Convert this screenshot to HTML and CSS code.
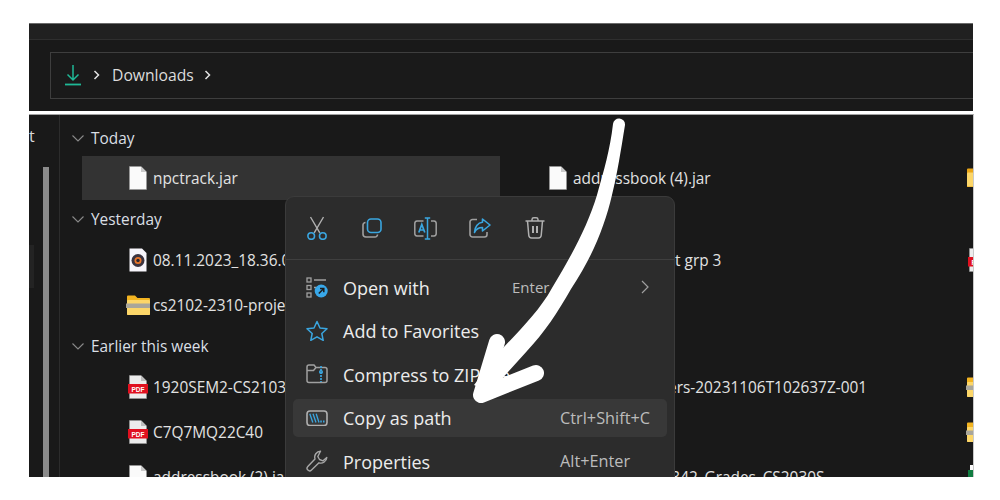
FILE: index.html
```html
<!DOCTYPE html>
<html lang="en">
<head>
<meta charset="utf-8">
<title>Downloads</title>
<link rel="stylesheet" href="styles.css">
</head>
<body>
<svg class="defs" width="0" height="0" aria-hidden="true">
  <defs>
    <symbol id="doc" viewBox="0 0 18 24"><path d="M.5.5H12L17.5 6V23.5H.5Z" fill="#fafafa" stroke="#9a9a9a" stroke-width=".6"/><path d="M12 .5V6H17.5Z" fill="#c9c9c9"/></symbol>
    <symbol id="pdf" viewBox="0 0 20 24"><path d="M1.5.5H13L18.5 6V23.5H1.5Z" fill="#ececec" stroke="#9a9a9a" stroke-width=".6"/><path d="M13 .5V6H18.5Z" fill="#bdbdbd"/><rect x="0" y="9" width="20" height="9.500" fill="#e0101f"/><text x="10" y="16.500" class="pdf-text" text-anchor="middle">PDF</text></symbol>
    <symbol id="zip" viewBox="0 0 24 20"><path d="M1 1.500A1 1 0 0 1 2 .5H9L11.500 3H23A1 1 0 0 1 24 4V19A1 1 0 0 1 23 20H2A1 1 0 0 1 1 19Z" fill="#f3b421"/><rect x="1" y="5" width="23" height="15" rx="1" fill="#fcd669"/><rect x="0" y="8.500" width="24" height="4.500" fill="#a9a69a"/></symbol>
    <symbol id="folder" viewBox="0 0 24 20"><path d="M1 1.500A1 1 0 0 1 2 .5H9L11.500 3H23V19H1Z" fill="#eaa516"/><rect x="1" y="4.500" width="23" height="14" rx="1" fill="#fcd669"/></symbol>
  </defs>
</svg>

<main class="shot">
  <header class="top-pane">
    <div class="toolbar"></div>
    <div class="address-row">
      <nav class="address">
        <svg class="dl-icon" viewBox="0 0 16 22" width="16" height="22"><path d="M8 1V16M2.500 10.500 8 16l5.500-5.500" fill="none" stroke="#1fb896" stroke-width="1.500"/><path d="M0 20.500H16" stroke="#1fb896" stroke-width="1.800"/></svg>
        <svg class="crumb" viewBox="0 0 7 10" width="7" height="10"><path d="M1.500 1 5.500 5l-4 4" fill="none" stroke="#e4e4e4" stroke-width="1.500"/></svg>
        <span class="crumb-text">Downloads</span>
        <svg class="crumb" viewBox="0 0 7 10" width="7" height="10"><path d="M1.500 1 5.500 5l-4 4" fill="none" stroke="#e4e4e4" stroke-width="1.500"/></svg>
      </nav>
    </div>
  </header>

  <section class="bottom-pane">
    <aside class="side">
      <span class="side-letter">t</span>
      <span class="side-active"></span>
      <span class="side-thumb"></span>
    </aside>

    <div class="files">
      <h2 class="group">
        <svg class="chev" viewBox="0 0 12 7" width="12" height="7"><path d="M.5.5 6 6 11.500.5" fill="none" stroke="#8a8a8a" stroke-width="1.100"/></svg>
        Today
      </h2>
      <div class="row">
        <div class="cell selected"><span class="slot"><svg class="ic" width="18" height="24"><use href="#doc"/></svg></span><span>npctrack.jar</span></div>
        <div class="cell"><span class="slot"><svg class="ic" width="18" height="24"><use href="#doc"/></svg></span><span>addressbook (4).jar</span></div>
        <div class="cell"><span class="slot"><svg class="ic-wide" width="24" height="20"><use href="#folder"/></svg></span></div>
      </div>

      <h2 class="group">
        <svg class="chev" viewBox="0 0 12 7" width="12" height="7"><path d="M.5.5 6 6 11.500.5" fill="none" stroke="#8a8a8a" stroke-width="1.100"/></svg>
        Yesterday
      </h2>
      <div class="row">
        <div class="cell">
          <span class="slot"><svg class="ic" width="18" height="24" viewBox="0 0 18 24"><path d="M.5.5H13L17.500 5V23.500H.5Z" fill="#f7f5fb"/><circle cx="9" cy="12.500" r="6.500" fill="#3a3340"/><circle cx="9" cy="12.500" r="3.500" fill="#e8752a"/><circle cx="9" cy="12.500" r="1.700" fill="#2a2530"/></svg></span>
          <span>08.11.2023_18.36.04.mp4</span>
        </div>
        <div class="cell"><span class="slot"><svg class="ic" width="18" height="24"><use href="#doc"/></svg></span><span>CS2102 Project grp 3</span></div>
        <div class="cell"><span class="slot"><svg class="ic-pdf" width="20" height="24"><use href="#pdf"/></svg></span></div>
      </div>
      <div class="row">
        <div class="cell"><span class="slot"><svg class="ic-wide" width="24" height="20"><use href="#zip"/></svg></span><span>cs2102-2310-project</span></div>
      </div>

      <h2 class="group">
        <svg class="chev" viewBox="0 0 12 7" width="12" height="7"><path d="M.5.5 6 6 11.500.5" fill="none" stroke="#8a8a8a" stroke-width="1.100"/></svg>
        Earlier this week
      </h2>
      <div class="row">
        <div class="cell"><span class="slot"><svg class="ic-pdf" width="20" height="24"><use href="#pdf"/></svg></span><span>1920SEM2-CS2103T.pdf</span></div>
        <div class="cell"><span class="slot"><svg class="ic" width="18" height="24"><use href="#doc"/></svg></span><span>Our Year Papers-20231106T102637Z-001</span></div>
        <div class="cell"><span class="slot"><svg class="ic-wide" width="24" height="20"><use href="#zip"/></svg></span></div>
      </div>
      <div class="row">
        <div class="cell"><span class="slot"><svg class="ic-pdf" width="20" height="24"><use href="#pdf"/></svg></span><span>C7Q7MQ22C40</span></div>
        <div class="cell"></div>
        <div class="cell"><span class="slot"><svg class="ic-wide" width="24" height="20"><use href="#zip"/></svg></span></div>
      </div>
      <div class="row">
        <div class="cell"><span class="slot"><svg class="ic" width="18" height="24"><use href="#doc"/></svg></span><span>addressbook (2).jar</span></div>
        <div class="cell"><span class="slot"><svg class="ic" width="18" height="24"><use href="#doc"/></svg></span><span>AY2324_Sem_342_Grades_CS2030S</span></div>
        <div class="cell"><span class="slot"><svg class="ic-pdf" width="20" height="24" viewBox="0 0 20 24"><rect x="2" y="0" width="16" height="24" fill="#fafafa"/><rect x="0" y="5" width="20" height="14" fill="#107c41"/></svg></span></div>
      </div>
    </div>

    <div class="menu">
      <div class="menu-actions">
        <button class="action" type="button" aria-label="Cut">
          <svg viewBox="0 0 20 24" width="20" height="24" fill="none" stroke-width="1.400"><path d="M3.500 1 12.800 16.800M16.500 1 7.200 16.800" stroke="#b0b0b0"/><circle cx="4.200" cy="20" r="3.300" stroke="#3aa6e0" stroke-width="1.600"/><circle cx="15.800" cy="20" r="3.300" stroke="#3aa6e0" stroke-width="1.600"/></svg>
        </button>
        <button class="action" type="button" aria-label="Copy">
          <svg viewBox="0 0 20 20" width="20" height="20" fill="none" stroke-width="1.600"><path d="M3.500 4.500A2.500 2.500 0 0 0 1 7V16A3 3 0 0 0 4 19H13A2.500 2.500 0 0 0 15.500 16.500" stroke="#a0a0a0"/><rect x="5.500" y="1" width="13.500" height="13.500" rx="3.500" stroke="#3aa6e0"/></svg>
        </button>
        <button class="action" type="button" aria-label="Rename">
          <svg viewBox="0 0 23 23" width="23" height="23" fill="none" stroke-width="1.500"><path d="M9.500 4H3A2.500 2.500 0 0 0 .8 6.500V16.500A2.500 2.500 0 0 0 3 19H9.500M17 4H20A2.500 2.500 0 0 1 22.200 6.500V16.500A2.500 2.500 0 0 1 20 19H17" stroke="#a0a0a0"/><path d="M13.500 1V22M10.800 1H16.200M10.800 22H16.200" stroke="#3aa6e0"/><path d="M4.800 15.500 7.800 7.500 10.800 15.500M5.800 13H9.800" stroke="#3aa6e0" stroke-width="1.700"/></svg>
        </button>
        <button class="action" type="button" aria-label="Share">
          <svg viewBox="0 0 22 20" width="22" height="20" fill="none" stroke-width="1.600"><path d="M8 1.500H3.500A2.500 2.500 0 0 0 1 4V16.500A2.500 2.500 0 0 0 3.500 19H15.500A2.500 2.500 0 0 0 18 16.500V14" stroke="#a0a0a0"/><path d="M13.500 1 21 7 13.500 13V9.500C10 9.500 7 11 5.500 14.500 5.500 9 9 4.500 13.500 4.300Z" stroke="#3aa6e0" stroke-linejoin="round"/></svg>
        </button>
        <button class="action" type="button" aria-label="Delete">
          <svg viewBox="0 0 20 22" width="20" height="22" fill="none" stroke="#b0b0b0" stroke-width="1.500"><path d="M.5 4H19.500M7 4V2.500A1.800 1.800 0 0 1 8.800 .8H11.200A1.800 1.800 0 0 1 13 2.500V4M2.500 4 3.800 18.500A2.800 2.800 0 0 0 6.500 21H13.500A2.800 2.800 0 0 0 16.200 18.500L17.500 4"/><path d="M8 9V16M12 9V16" stroke-width="2"/></svg>
        </button>
      </div>
      <ul class="menu-list">
        <li class="item">
          <svg class="item-icon" viewBox="0 0 22 21" width="22" height="21" fill="none" stroke="#a0a0a0" stroke-width="1.300"><rect x="1" y="1" width="4" height="4"/><rect x="1" y="8.500" width="4" height="4"/><rect x="1" y="16" width="4" height="4"/><path d="M8 3H20M8 10.500H10"/><circle cx="15.200" cy="14" r="6.500" fill="#38a8ea" stroke="none"/><path d="M12.800 16.500 17.500 11.800M14 11.500H17.800V15.300" stroke="#1c1c1c" stroke-width="1.500"/></svg>
          <span class="label">Open with</span>
          <span class="short wide">Enter</span>
          <svg class="sub" viewBox="0 0 8 14" width="8" height="14"><path d="M1 1 7 7 1 13" fill="none" stroke="#a0a0a0" stroke-width="1.200"/></svg>
        </li>
        <li class="item">
          <svg class="item-icon" viewBox="0 0 22 21" width="22" height="21"><path d="M11 1.500 14 8 21 8.800 15.800 13.500 17.200 20.300 11 16.800 4.800 20.300 6.200 13.500 1 8.800 8 8Z" fill="none" stroke="#3aa6e0" stroke-width="1.500" stroke-linejoin="round"/></svg>
          <span class="label">Add to Favorites</span>
        </li>
        <li class="item">
          <svg class="item-icon" viewBox="0 0 22 20" width="22" height="20" fill="none" stroke-width="1.500"><path d="M1 16.500V3A2 2 0 0 1 3 1H8L10 3.500H19A2 2 0 0 1 21 5.500V16.500A2 2 0 0 1 19 18.500H3A2 2 0 0 1 1 16.500ZM1 6.500H7.500L10 3.500" stroke="#a0a0a0"/><path d="M15 2V18" stroke="#3aa6e0" stroke-width="1.700" stroke-dasharray="2 1"/><circle cx="15" cy="8" r="1.300" stroke="#3aa6e0"/></svg>
          <span class="label">Compress to ZIP file</span>
        </li>
        <li class="item active">
          <svg class="item-icon" viewBox="0 0 22 16" width="22" height="16" fill="none" stroke-width="1.600"><rect x="1" y="1" width="20" height="14.500" rx="3" stroke="#b0b0b0"/><path d="M3.800 3.800 6.800 12.500M7 3.800 10 12.500M10.200 3.800 13 12.500" stroke="#3aa6e0" stroke-width="1.300"/><path d="M14.300 11.500H15.800M17 11.500H18.500" stroke="#3aa6e0" stroke-width="1.800"/></svg>
          <span class="label">Copy as path</span>
          <span class="short">Ctrl+Shift+C</span>
        </li>
        <li class="item">
          <svg class="item-icon" viewBox="0 0 22 22" width="22" height="22"><path d="M14.500 1.200A6 6 0 0 0 9 9L1.800 16.500A2.500 2.500 0 0 0 5.500 20L13 12.800A6 6 0 0 0 20.800 7.500L17 10.800 13.500 9.500 11.800 6.500 14.500 1.200Z" fill="none" stroke="#a8a8a8" stroke-width="1.400" stroke-linejoin="round"/></svg>
          <span class="label">Properties</span>
          <span class="short">Alt+Enter</span>
        </li>
      </ul>
    </div>
  </section>

  <svg class="arrow" viewBox="0 0 1000 500" width="1000" height="500" aria-hidden="true">
    <path d="M613 124A6 6 0 0 1 625 125C621 150 617 175 612 195 605 225 593 256 571 289 558 312 544 333 527 351L490 392 474 385 503 348C520 330 540 310 552 288 572 255 588 225 597 195 604 170 610 150 613 124Z" fill="#fff"/>
    <path d="M497 342 481 395 536 373" fill="none" stroke="#fff" stroke-width="16" stroke-linecap="round" stroke-linejoin="round"/>
  </svg>
</main>
</body>
</html>
```

FILE: styles.css
```css
* { box-sizing: border-box; }

html, body {
  margin: 0;
  height: 500px;
  overflow: hidden;
  background: #fff;
}

body {
  font-family: "Open Sans", "Noto Sans", sans-serif;
  color: #e2e2e2;
}

.defs { position: absolute; }

.pdf-text {
  font-family: "Liberation Sans", sans-serif;
  font-size: 6.500px;
  font-weight: 700;
  fill: #fff;
}

.shot {
  position: relative;
  width: 1000px;
  height: 500px;
  padding: 23px 26px 23px 29px;
  display: flex;
  flex-direction: column;
  gap: 3px;
}

/* top pane */
.top-pane {
  height: 88px;
  margin-right: 1px;
  background: #191919;
  border-top: 1px solid #6a6a6a;
  flex: none;
}

.toolbar {
  height: 16px;
  background: #202020;
  border-bottom: 1px solid #2e2e2e;
}

.address-row { padding: 12px 0 0 21px; }

.address {
  height: 47px;
  display: flex;
  align-items: center;
  border: 1px solid #3e3e3e;
  border-right: 0;
  background: #1a1a1a;
  padding: 0 0 2px 14px;
  font-size: 15.700px;
}

.dl-icon { margin-right: 12px; }
.crumb-text { margin: 0 10px 0 12px; color: #dcdcdc; }

/* bottom pane */
.bottom-pane {
  position: relative;
  flex: 1;
  display: flex;
  overflow: hidden;
  background: #191919;
  border-top: 1px solid #a0a0a0;
  border-right: 1px solid #c8c8c8;
}

.side {
  position: relative;
  width: 31px;
  flex: none;
  border-right: 1px solid #2c2c2c;
}

.side-letter {
  position: absolute;
  left: 0;
  top: 10px;
  font-size: 16px;
  color: #d8d8d8;
}

.side-active {
  position: absolute;
  left: 0;
  top: 130px;
  width: 5px;
  height: 43px;
  background: #232323;
}

.side-thumb {
  position: absolute;
  left: 14px;
  top: 52px;
  bottom: 0;
  width: 6px;
  background: #8b8b8b;
}

.files {
  flex: 1;
  min-width: 0;
  padding: 10px 0 0 12px;
  overflow: hidden;
}

.group {
  display: flex;
  align-items: center;
  gap: 7px;
  height: 26px;
  margin: 5px 0 6px;
  font-size: 15.400px;
  font-weight: 400;
  color: #dadfe4;
}

.group:first-child { margin: 0 0 5px; }

.chev { flex: none; }

.row {
  display: grid;
  grid-template-columns: 420px 420px 420px;
  height: 45px;
  margin-left: 10px;
}

.cell {
  display: flex;
  align-items: center;
  height: 44px;
  padding-left: 44px;
  font-size: 15.400px;
  white-space: nowrap;
  margin-right: 2px;
}

.slot {
  flex: none;
  width: 27px;
  display: flex;
  align-items: center;
}

.ic { flex: none; margin-left: 3px; }
.ic-pdf { flex: none; margin-left: 2px; }
.ic-wide { flex: none; }

.selected { background: #333; }

/* context menu */
.menu {
  position: absolute;
  left: 256px;
  top: 81px;
  width: 390px;
  height: 300px;
  background: #2c2c2c;
  border: 1px solid #3b3b3b;
  border-radius: 9px;
}

.menu-actions {
  display: flex;
  height: 63px;
  padding-left: 4px;
  border-bottom: 1px solid #3f3f3f;
}

.action {
  width: 54.400px;
  padding: 0;
  border: 0;
  background: none;
  display: flex;
  align-items: center;
  justify-content: center;
}

.menu-list {
  list-style: none;
  margin: 0;
  padding: 8px 7px 0;
  display: flex;
  flex-direction: column;
  gap: 5.500px;
}

.item {
  display: flex;
  align-items: center;
  height: 38px;
  padding-left: 13px;
  border-radius: 5px;
  font-size: 18px;
  color: #ececec;
}

.item.active { background: #383838; }

.item-icon { flex: none; margin-right: 15px; }

.label { flex: 1; white-space: nowrap; padding-top: 1px; }

.short {
  width: 107px;
  flex: none;
  font-size: 16.300px;
  color: #bcbcbc;
}

.short.wide { width: 129px; font-size: 15px; }

.sub { flex: none; margin-right: 18px; }

.arrow {
  position: absolute;
  left: 0;
  top: 0;
  pointer-events: none;
}
```
